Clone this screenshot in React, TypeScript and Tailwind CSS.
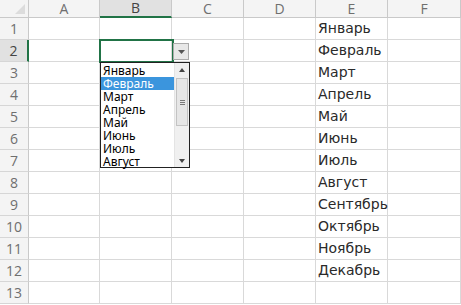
import React from 'react';

const cols = ['A', 'B', 'C', 'D', 'E', 'F'];
const months = [
  'Январь', 'Февраль', 'Март', 'Апрель', 'Май', 'Июнь',
  'Июль', 'Август', 'Сентябрь', 'Октябрь', 'Ноябрь', 'Декабрь',
];
const listItems = months.slice(0, 8);

function Dropdown() {
  return (
    <>
      {/* arrow button next to active cell */}
      <div className="absolute left-[173px] top-[43px] w-[16px] h-[17px] border border-[#ababab] bg-[#e8e8e8] flex items-center justify-center">
        <svg width="7" height="4" viewBox="0 0 7 4"><path d="M0 0h7L3.5 4z" fill="#555" /></svg>
      </div>
      {/* list */}
      <div className="absolute left-[100px] top-[62px] w-[90px] h-[106px] border border-[#222] bg-white flex font-['Noto_Sans',sans-serif] text-[12px] text-black">
        <div className="flex-1 flex flex-col pt-[1px]">
          {listItems.map((m, i) => (
            <div
              key={m}
              className={
                'h-[13px] leading-[13px] pl-[2px] ' +
                (i === 1 ? 'bg-[#3b95dd] text-white' : '')
              }
            >
              {m}
            </div>
          ))}
        </div>
        <div className="w-[15px] bg-[#f0f0f0] border-l border-[#e4e4e4] flex flex-col items-center">
          <div className="h-[13px] flex items-center justify-center">
            <svg width="6" height="4" viewBox="0 0 6 4"><path d="M0 4h6L3 0z" fill="#444" /></svg>
          </div>
          <div className="w-[12px] h-[48px] mt-[2px] border border-[#c3c3c3] bg-[#e6e6e6] flex flex-col items-center justify-center gap-[1px]">
            <div className="w-[5px] h-px bg-[#7a7a7a]" />
            <div className="w-[5px] h-px bg-[#7a7a7a]" />
            <div className="w-[5px] h-px bg-[#7a7a7a]" />
          </div>
          <div className="flex-1" />
          <div className="h-[13px] flex items-center justify-center">
            <svg width="6" height="4" viewBox="0 0 6 4"><path d="M0 0h6L3 4z" fill="#444" /></svg>
          </div>
        </div>
      </div>
    </>
  );
}

export default function App() {
  return (
    <div className="relative w-[461px] h-[305px] overflow-hidden bg-white">
      <div className="grid grid-cols-[29px_71px_72px_72px_72px_72px_73px] grid-rows-[18px_repeat(13,22px)]">
        {/* corner */}
        <div className="bg-[#f4f4f4] border-r border-b border-[#c9c9c9] relative">
          <svg className="absolute right-[3px] bottom-[3px]" width="10" height="10" viewBox="0 0 10 10">
            <path d="M10 0v10H0z" fill="#dcdcdc" />
          </svg>
        </div>
        {cols.map((c) => (
          <div
            key={c}
            className={
              'flex items-center justify-center font-["Open_Sans",sans-serif] text-[14px] leading-none border-r ' +
              (c === 'B'
                ? 'bg-[#e1e1e1] text-[#444] border-b-2 border-b-[#217346] border-r-[#c9c9c9]'
                : 'bg-[#f4f4f4] text-[#6f6f6f] border-b border-[#c9c9c9]')
            }
          >
            {c}
          </div>
        ))}

        {Array.from({ length: 13 }, (_, r) => (
          <React.Fragment key={r}>
            <div
              className={
                'flex items-center justify-center font-["Open_Sans",sans-serif] text-[14px] leading-none border-b border-[#d6d6d6] ' +
                (r === 1
                  ? 'bg-[#e1e1e1] text-[#444] border-r-2 border-r-[#217346]'
                  : 'bg-[#f4f4f4] text-[#6f6f6f] border-r border-r-[#c9c9c9]')
              }
            >
              {r + 1}
            </div>
            {cols.map((c, ci) => (
              <div
                key={c}
                className="border-r border-b border-[#d9d9d9] flex items-center pl-[2px] font-['DejaVu_Sans',sans-serif] text-[14px] text-[#2a2a2a] whitespace-nowrap"
              >
                {ci === 4 && months[r] ? months[r] : ''}
              </div>
            ))}
          </React.Fragment>
        ))}
      </div>

      {/* active cell B2 */}
      <div className="absolute left-[99px] top-[39px] w-[75px] h-[24px] border-2 border-[#217346]" />
      <Dropdown />
    </div>
  );
}
